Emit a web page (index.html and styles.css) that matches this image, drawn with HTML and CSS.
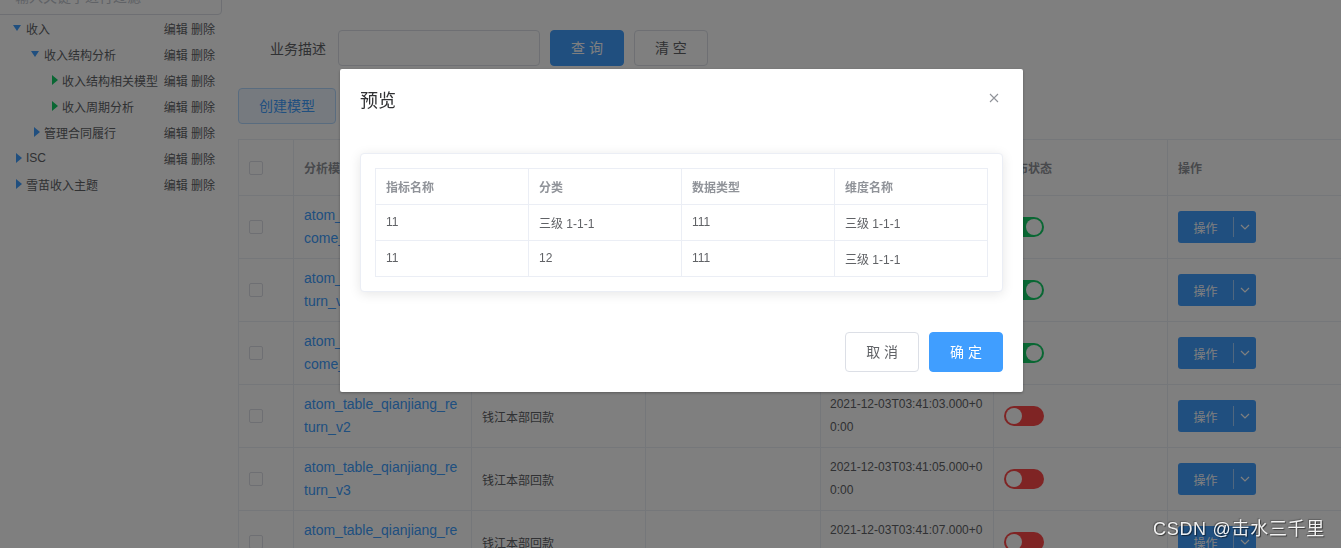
FILE: index.html
```html
<!DOCTYPE html>
<html lang="zh-CN">
<head>
<meta charset="utf-8">
<title>模型管理</title>
<link rel="stylesheet" href="styles.css">
</head>
<body>
<div class="page">
  <aside class="sidebar">
    <div class="filter">输入关键字进行过滤</div>
    <ul class="tree">
      <li class="node lv1"><span class="caret down"></span><span class="label">收入</span><span class="ops">编辑 删除</span></li>
      <li class="node lv2"><span class="caret down"></span><span class="label">收入结构分析</span><span class="ops">编辑 删除</span></li>
      <li class="node lv3"><span class="caret right leaf"></span><span class="label">收入结构相关模型</span><span class="ops">编辑 删除</span></li>
      <li class="node lv3"><span class="caret right leaf"></span><span class="label">收入周期分析</span><span class="ops">编辑 删除</span></li>
      <li class="node lv2"><span class="caret right"></span><span class="label">管理合同履行</span><span class="ops">编辑 删除</span></li>
      <li class="node lv1"><span class="caret right"></span><span class="label">ISC</span><span class="ops">编辑 删除</span></li>
      <li class="node lv1"><span class="caret right"></span><span class="label">雪苗收入主题</span><span class="ops">编辑 删除</span></li>
    </ul>
  </aside>

  <main class="main">
    <div class="search">
      <label class="search-label">业务描述</label>
      <div class="input"></div>
      <button class="btn btn-primary">查 询</button>
      <button class="btn">清 空</button>
    </div>
    <div class="toolbar">
      <button class="btn btn-plain">创建模型</button>
    </div>

    <div class="grid">
      <div class="th"><span class="cb"></span></div>
      <div class="th">分析模型名称</div>
      <div class="th">业务描述</div>
      <div class="th">所属分类</div>
      <div class="th">创建时间</div>
      <div class="th">发布状态</div>
      <div class="th">操作</div>

      <div class="td"><span class="cb"></span></div>
      <div class="td td-link"><span class="link">atom_table_qianjiang_income_v1</span></div>
      <div class="td">钱江本部收入</div>
      <div class="td"></div>
      <div class="td td-time"><span class="time">2021-12-03T03:40:55.000+00:00</span></div>
      <div class="td"><span class="switch on"><i></i></span></div>
      <div class="td"><span class="split"><span class="split-main">操作</span><span class="split-div"></span><span class="split-arrow"><svg width="10" height="6" viewBox="0 0 10 6"><polyline points="1,1 5,5 9,1" fill="none" stroke="#fff" stroke-width="1.2"/></svg></span></span></div>

      <div class="td"><span class="cb"></span></div>
      <div class="td td-link"><span class="link">atom_table_qianjiang_return_v1</span></div>
      <div class="td">钱江本部回款</div>
      <div class="td"></div>
      <div class="td td-time"><span class="time">2021-12-03T03:40:58.000+00:00</span></div>
      <div class="td"><span class="switch on"><i></i></span></div>
      <div class="td"><span class="split"><span class="split-main">操作</span><span class="split-div"></span><span class="split-arrow"><svg width="10" height="6" viewBox="0 0 10 6"><polyline points="1,1 5,5 9,1" fill="none" stroke="#fff" stroke-width="1.2"/></svg></span></span></div>

      <div class="td"><span class="cb"></span></div>
      <div class="td td-link"><span class="link">atom_table_qianjiang_income_v2</span></div>
      <div class="td">钱江本部收入</div>
      <div class="td"></div>
      <div class="td td-time"><span class="time">2021-12-03T03:41:01.000+00:00</span></div>
      <div class="td"><span class="switch on"><i></i></span></div>
      <div class="td"><span class="split"><span class="split-main">操作</span><span class="split-div"></span><span class="split-arrow"><svg width="10" height="6" viewBox="0 0 10 6"><polyline points="1,1 5,5 9,1" fill="none" stroke="#fff" stroke-width="1.2"/></svg></span></span></div>

      <div class="td"><span class="cb"></span></div>
      <div class="td td-link"><span class="link">atom_table_qianjiang_return_v2</span></div>
      <div class="td">钱江本部回款</div>
      <div class="td"></div>
      <div class="td td-time"><span class="time">2021-12-03T03:41:03.000+00:00</span></div>
      <div class="td"><span class="switch off"><i></i></span></div>
      <div class="td"><span class="split"><span class="split-main">操作</span><span class="split-div"></span><span class="split-arrow"><svg width="10" height="6" viewBox="0 0 10 6"><polyline points="1,1 5,5 9,1" fill="none" stroke="#fff" stroke-width="1.2"/></svg></span></span></div>

      <div class="td"><span class="cb"></span></div>
      <div class="td td-link"><span class="link">atom_table_qianjiang_return_v3</span></div>
      <div class="td">钱江本部回款</div>
      <div class="td"></div>
      <div class="td td-time"><span class="time">2021-12-03T03:41:05.000+00:00</span></div>
      <div class="td"><span class="switch off"><i></i></span></div>
      <div class="td"><span class="split"><span class="split-main">操作</span><span class="split-div"></span><span class="split-arrow"><svg width="10" height="6" viewBox="0 0 10 6"><polyline points="1,1 5,5 9,1" fill="none" stroke="#fff" stroke-width="1.2"/></svg></span></span></div>

      <div class="td"><span class="cb"></span></div>
      <div class="td td-link"><span class="link">atom_table_qianjiang_return_v4</span></div>
      <div class="td">钱江本部回款</div>
      <div class="td"></div>
      <div class="td td-time"><span class="time">2021-12-03T03:41:07.000+00:00</span></div>
      <div class="td"><span class="switch off"><i></i></span></div>
      <div class="td"><span class="split"><span class="split-main">操作</span><span class="split-div"></span><span class="split-arrow"><svg width="10" height="6" viewBox="0 0 10 6"><polyline points="1,1 5,5 9,1" fill="none" stroke="#fff" stroke-width="1.2"/></svg></span></span></div>
    </div>
  </main>
</div>

<div class="mask"></div>

<div class="dialog">
  <div class="dialog-header">
    <span class="dialog-title">预览</span>
    <span class="dialog-close"><svg width="10" height="10" viewBox="0 0 10 10"><path d="M1 1 L9 9 M9 1 L1 9" stroke="#909399" stroke-width="1.1" fill="none"/></svg></span>
  </div>
  <div class="dialog-body">
    <div class="card">
      <div class="ptable">
        <div class="ph">指标名称</div>
        <div class="ph">分类</div>
        <div class="ph">数据类型</div>
        <div class="ph">维度名称</div>
        <div>11</div>
        <div>三级 1-1-1</div>
        <div>111</div>
        <div>三级 1-1-1</div>
        <div>11</div>
        <div>12</div>
        <div>111</div>
        <div>三级 1-1-1</div>
      </div>
    </div>
  </div>
  <div class="dialog-footer">
    <button class="btn btn-lg">取 消</button>
    <button class="btn btn-lg btn-primary">确 定</button>
  </div>
</div>

<div class="watermark">CSDN @击水三千里</div>
</body>
</html>
```

FILE: styles.css
```css
* { box-sizing: border-box; }

html, body {
  margin: 0;
  padding: 0;
}

body {
  font-family: "Liberation Sans", "Noto Sans CJK SC", sans-serif;
  background: #fff;
  color: #606266;
  overflow: hidden;
}

.page {
  display: flex;
  height: 548px;
  overflow: hidden;
}

/* ---------- sidebar ---------- */
.sidebar {
  width: 222px;
  flex: none;
}

.filter {
  margin-top: -21px;
  margin-left: -4px;
  width: 226px;
  height: 36px;
  border: 1px solid #dcdfe6;
  border-radius: 4px;
  padding: 0 18px;
  font-size: 14px;
  line-height: 34px;
  color: #c0c4cc;
}

.tree {
  list-style: none;
  margin: 0;
  padding: 0;
}

.node {
  height: 26px;
  display: flex;
  align-items: center;
  font-size: 12px;
  color: #606266;
  padding-right: 7px;
  white-space: nowrap;
}

.lv1 { padding-left: 8px; }
.lv2 { padding-left: 26px; }
.lv3 { padding-left: 44px; }

.caret {
  width: 18px;
  height: 26px;
  flex: none;
  display: flex;
  align-items: center;
  justify-content: center;
}

.caret::before {
  content: "";
  display: block;
  width: 0;
  height: 0;
}

.caret.down::before {
  border-left: 4px solid transparent;
  border-right: 4px solid transparent;
  border-top: 6px solid #409eff;
}

.caret.right::before {
  margin-left: 4px;
  border-top: 5px solid transparent;
  border-bottom: 5px solid transparent;
  border-left: 6px solid #409eff;
}

.caret.leaf::before {
  border-left-color: #13ce66;
}

.label { flex: 1; }

.ops { flex: none; }

/* ---------- main ---------- */
.main {
  flex: 1;
  min-width: 0;
  padding-left: 16px;
  overflow: hidden;
}

.search {
  display: flex;
  align-items: center;
  margin-top: 30px;
  height: 36px;
}

.search-label {
  width: 100px;
  padding-right: 12px;
  text-align: right;
  font-size: 14px;
  color: #606266;
}

.input {
  width: 202px;
  height: 36px;
  border: 1px solid #dcdfe6;
  border-radius: 4px;
  background: #fff;
}

.btn {
  height: 36px;
  padding: 0 20px;
  margin: 0 0 0 10px;
  font-family: inherit;
  font-size: 14px;
  line-height: 1;
  border: 1px solid #dcdfe6;
  border-radius: 4px;
  background: #fff;
  color: #606266;
  white-space: pre;
}

.btn-primary {
  background: #409eff;
  border-color: #409eff;
  color: #fff;
}

.btn-plain {
  margin-left: 0;
  background: #ecf5ff;
  border-color: #b3d8ff;
  color: #409eff;
}

.toolbar {
  margin-top: 22px;
  display: flex;
}

/* ---------- table ---------- */
.grid {
  margin-top: 15px;
  width: 1104px;
  display: grid;
  grid-template-columns: 55px 178px 174px 175px 173px 174px 174px;
  border-left: 1px solid #ebeef5;
  border-top: 1px solid #ebeef5;
}

.th, .td {
  border-right: 1px solid #ebeef5;
  border-bottom: 1px solid #ebeef5;
  padding: 0 10px;
  display: flex;
  align-items: center;
  font-size: 12px;
  overflow: hidden;
}

.th {
  height: 56px;
  font-weight: bold;
  color: #909399;
  white-space: nowrap;
}

.td {
  height: 63px;
  color: #606266;
}

.td-link { padding-right: 12px; }

.link {
  font-size: 14px;
  line-height: 23px;
  color: #409eff;
  word-break: break-all;
}

.td-time { padding: 0 8px 0 9px; }

.time {
  line-height: 23px;
  word-break: break-all;
}

.cb {
  width: 14px;
  height: 14px;
  border: 1px solid #dcdfe6;
  border-radius: 2px;
  background: #fff;
}

.switch {
  width: 40px;
  height: 20px;
  border-radius: 10px;
  padding: 2px;
  display: flex;
}

.switch i {
  width: 16px;
  height: 16px;
  border-radius: 50%;
  background: #fff;
}

.switch.on {
  background: #13ce66;
  justify-content: flex-end;
}

.switch.off {
  background: #ff4949;
}

.split {
  display: flex;
  height: 32px;
  border-radius: 3px;
  background: #409eff;
  color: #fff;
  font-size: 12px;
}

.split-main {
  width: 55px;
  display: flex;
  align-items: center;
  justify-content: center;
}

.split-div {
  width: 1px;
  height: 20px;
  align-self: center;
  background: rgba(255, 255, 255, 0.5);
}

.split-arrow {
  width: 22px;
  display: flex;
  align-items: center;
  justify-content: center;
}

/* ---------- dialog ---------- */
.mask {
  position: fixed;
  inset: 0;
  background: rgba(0, 0, 0, 0.5);
}

.dialog {
  position: fixed;
  left: 340px;
  top: 69px;
  width: 683px;
  background: #fff;
  border-radius: 2px;
  box-shadow: 0 1px 3px rgba(0, 0, 0, 0.3);
}

.dialog-header {
  padding: 20px 20px 10px;
  display: flex;
  align-items: center;
  justify-content: space-between;
}

.dialog-title {
  font-size: 18px;
  line-height: 24px;
  color: #303133;
}

.dialog-close {
  display: flex;
  margin-right: 4px;
  margin-top: -6px;
}

.dialog-body {
  padding: 30px 20px;
}

.card {
  border: 1px solid #ebeef5;
  border-radius: 4px;
  box-shadow: 0 2px 12px 0 rgba(0, 0, 0, 0.1);
  padding: 14px;
  background: #fff;
}

.ptable {
  display: grid;
  grid-template-columns: repeat(4, 153px);
  border-left: 1px solid #ebeef5;
  border-top: 1px solid #ebeef5;
}

.ptable > div {
  height: 36px;
  border-right: 1px solid #ebeef5;
  border-bottom: 1px solid #ebeef5;
  padding: 0 10px 1px;
  display: flex;
  align-items: center;
  font-size: 12px;
  color: #606266;
}

.ptable > .ph {
  color: #909399;
  font-weight: bold;
}

.dialog-footer {
  padding: 10px 20px 20px;
  display: flex;
  justify-content: flex-end;
  gap: 10px;
}

.btn-lg {
  height: 40px;
  margin: 0;
}

/* ---------- watermark ---------- */
.watermark {
  position: fixed;
  right: 16px;
  bottom: 8px;
  font-size: 18px;
  letter-spacing: 0.7px;
  color: rgba(255, 255, 255, 0.92);
  text-shadow: 1px 1px 1px rgba(0, 0, 0, 0.55), -1px -1px 1px rgba(0, 0, 0, 0.25);
  white-space: nowrap;
}
```
